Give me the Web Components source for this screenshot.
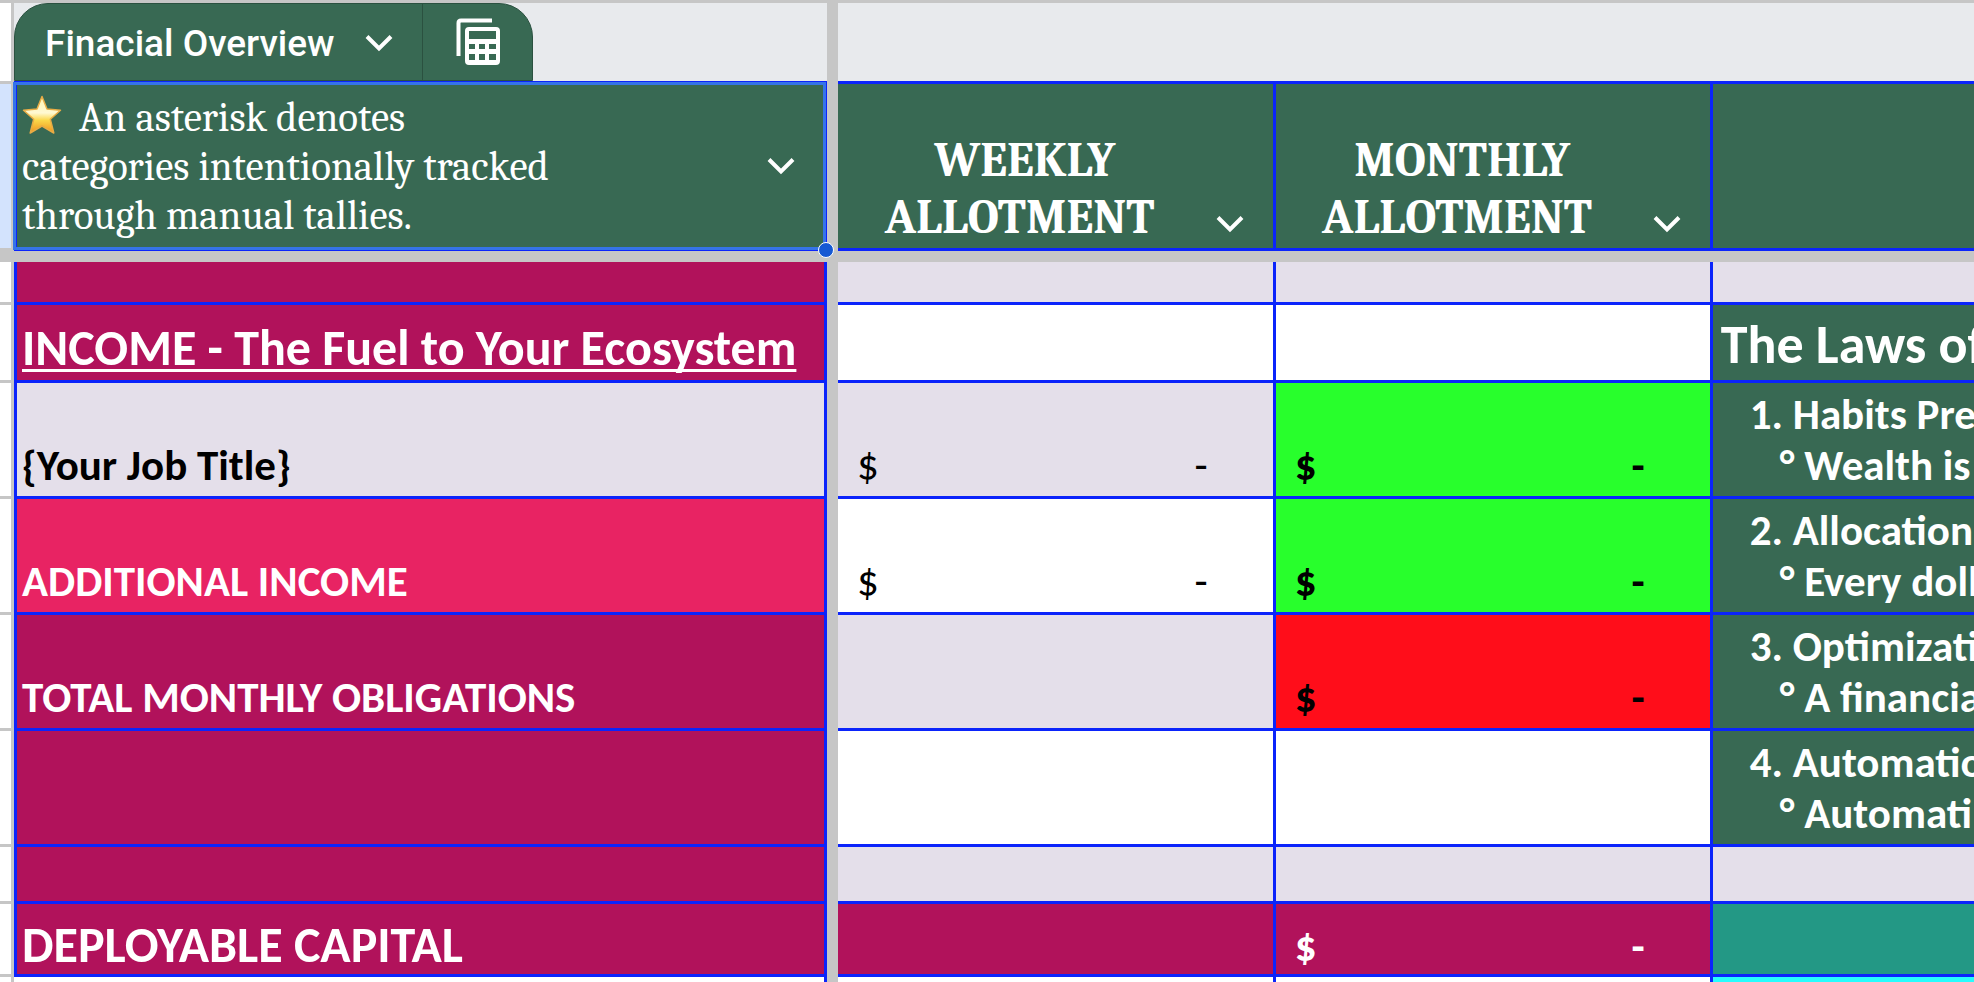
<!DOCTYPE html>
<html lang="en">
<head>
<meta charset="utf-8">
<title>Finacial Overview</title>
<style>
	body { margin: 0; background: #fff; }
</style>
</head>
<body>
<budget-sheet></budget-sheet>

<script>
const CHEVRON = `<svg width="28" height="18" viewBox="0 0 28 18" aria-hidden="true"><path d="M2 2.5 14 14.5 26 2.5" fill="none" stroke="currentColor" stroke-width="4"/></svg>`;

/* Button with a down arrow, used by the tab and the column headers */
class MenuArrow extends HTMLElement {
	connectedCallback() {
		this.attachShadow({ mode: 'open' });
		this.shadowRoot.innerHTML = `
      <style>
        :host { display: block; flex: none; }
        button {
          display: flex;
          padding: 0;
          border: 0;
          background: none;
          color: #fff;
          cursor: pointer;
        }
      </style>
      <button aria-label="${this.getAttribute('label') || 'Menu'}">${CHEVRON}</button>
    `;
	}
}

/* Table name tab that sits on top of the header row */
class TableTab extends HTMLElement {
	connectedCallback() {
		this.attachShadow({ mode: 'open' });
		this.shadowRoot.innerHTML = `
      <style>
        :host {
          display: flex;
          box-sizing: border-box;
          width: max-content;
          height: 78px;
          border: 1px solid #2b5140;
          border-radius: 34px 34px 0 0;
          background: #386953;
          color: #fff;
          font: 500 37px/1 Roboto, Inter, sans-serif;
        }
        .name {
          display: flex;
          align-items: center;
          box-sizing: border-box;
          width: 408px;
          padding: 2px 29px 0 30px;
          justify-content: space-between;
          border-right: 1px solid #2b5140;
          white-space: nowrap;
        }
        button {
          display: flex;
          align-items: center;
          justify-content: center;
          width: 109px;
          padding: 0;
          border: 0;
          background: none;
          color: inherit;
          cursor: pointer;
        }
      </style>
      <div class="name"><slot></slot><menu-arrow label="Table menu"></menu-arrow></div>
      <button aria-label="Table views">
        <svg width="44" height="48" viewBox="0 0 44 48" fill="none" stroke="currentColor" aria-hidden="true">
          <path d="M2.500 38V5q0-2.500 2.500-2.500H36" stroke-width="4"/>
          <path fill="currentColor" stroke="none" fill-rule="evenodd" d="M13 9h27a4 4 0 0 1 4 4v30a4 4 0 0 1-4 4H13a4 4 0 0 1-4-4V13a4 4 0 0 1 4-4zM13 13v8h27v-8zM13 26v5h6v-5zM23 26v5h6v-5zM33 26v5h7v-5zM13 36v6h6v-6zM23 36v6h6v-6zM33 36v6h7v-6z"/>
        </svg>
      </button>
    `;
	}
}

/* Column title with its menu arrow */
class ColumnTitle extends HTMLElement {
	connectedCallback() {
		this.attachShadow({ mode: 'open' });
		this.shadowRoot.innerHTML = `
      <style>
        :host {
          display: flex;
          align-items: flex-end;
          gap: 4px;
          padding: 0 29px 2px 0;
          color: #fff;
          font: 700 48px/57px Caladea, Cambria, "Liberation Serif", serif;
        }
        .text { flex: 1; text-align: center; }
        menu-arrow { margin-bottom: 13px; }
        :host([note]) {
          align-items: center;
          padding: 0 29px 0 5px;
          font-size: 41px;
          font-weight: 400;
          line-height: 49px;
        }
        :host([note]) .text { text-align: left; }
        :host([note]) menu-arrow { margin-bottom: 0; }
      </style>
      <div class="text"><slot></slot></div>
      <menu-arrow label="Column menu"></menu-arrow>
    `;
	}
}

class StarIcon extends HTMLElement {
	connectedCallback() {
		this.attachShadow({ mode: 'open' });
		this.shadowRoot.innerHTML = `
      <style>
        :host { display: inline-block; vertical-align: -4px; margin-right: 8px; }
        svg { display: block; }
      </style>
      <svg width="40" height="40" viewBox="0 0 40 40" role="img" aria-label="star">
        <defs><linearGradient id="g" x1="0" y1="0" x2="0" y2="1">
          <stop offset="0" stop-color="#fff3b0"/><stop offset=".45" stop-color="#fff9d2"/>
          <stop offset=".65" stop-color="#fbd84a"/><stop offset="1" stop-color="#f0921d"/>
        </linearGradient></defs>
        <path d="M20 1.500 25 14 38.500 15.200 28.300 24.200 31.800 38 20 31 8.200 38 11.700 24.200 1.500 15.200 15 14z" fill="url(#g)" stroke="#e8ac45" stroke-width="1.500" stroke-linejoin="round"/>
      </svg>
    `;
	}
}

/* Accounting format: currency sign left, amount right */
class MoneyValue extends HTMLElement {
	connectedCallback() {
		this.attachShadow({ mode: 'open' });
		this.shadowRoot.innerHTML = `
      <style>
        :host { display: flex; justify-content: space-between; padding: 0 65px 0 19px; }
      </style>
      <span>$</span><span><slot></slot></span>
    `;
	}
}

class BudgetSheet extends HTMLElement {
	connectedCallback() {
		this.attachShadow({ mode: 'open' });
		this.shadowRoot.innerHTML = `
      <style>
        :host {
          display: block;
          height: 100vh;
          overflow: hidden;
          --line: #0b24fb;
          --bar: #c6c6c6;
          --green: #386953;
          --berry: #b1125b;
          --mist: #e4dfea;
          font: 700 43px/51px Carlito, Calibri, Lato, sans-serif;
          color: #000;
        }
        table {
          width: 100%;
          table-layout: fixed;
          border-collapse: separate;
          border-spacing: 0;
          border-top: 3px solid var(--bar);
        }
        .c-num { width: 14px; }
        .c-name { width: 41.18%; }
        .c-bar { width: 11px; }
        .c-week { width: 22.18%; }
        .c-month { width: 22.14%; }

        th, td {
          box-sizing: border-box;
          padding: 0 0 5px;
          border: 0 solid var(--line);
          border-width: 0 3px 3px 0;
          text-align: left;
          vertical-align: bottom;
          font-weight: 700;
          white-space: nowrap;
          overflow: hidden;
        }
        .num { border-color: var(--bar); background: #fff; padding: 0; }
        .bar { border: 0; background: var(--bar); padding: 0; }
        .name { border-left-width: 3px; padding-left: 5px; color: #fff; }
        tr > :last-child { border-right: 0; }

        .band td { height: 81px; padding: 0; border-right: 0; background: #e8eaed; }
        .band .num { border-right: 3px solid var(--bar); background: #fff; }
        .band .bar, .freeze td { background: var(--bar); }
        .head > * { height: 167px; padding: 0; background: var(--green); white-space: normal; }
        .head .num { background: #d3e3fd; }
        .head .bar { background: var(--bar); }
        .head .name { position: relative; overflow: visible; vertical-align: middle; }
        .freeze td { height: 11px; border: 0; padding: 0; }

        .thin > * { height: 43px; }
        .title > * { height: 78px; padding-bottom: 7px; }
        .tall > * { height: 116px; }
        .gap > * { height: 57px; }
        .total > * { height: 73px; padding-bottom: 4px; }
        .total .sum { padding-bottom: 2px; }
        .last > * { height: 40px; border-bottom: 0; }
        .last .name { border-left: 0; }

        .berry { background: var(--berry); color: #fff; }
        .pink { background: #e82363; }
        .mist { background: var(--mist); }
        .lime { background: #28ff2c; }
        .red { background: #ff0d1a; }
        .teal { background: #239885; }
        .cyan { background: #27fcfd; }
        .dark { color: #000; }
        .plain { font-weight: 400; }
        .big { font-size: 50px; }
        .law { background: var(--green); color: #fff; padding-left: 37px; }
        .law p { margin: 0; }
        .law p + p { padding-left: 30px; }
        .heading { font-size: 54px; padding: 0 0 9px 8px; }
        u { text-decoration-thickness: 3px; text-underline-offset: 4px; text-decoration-skip-ink: none; }

        /* Selected cell outline and its fill handle */
        .selection {
          position: absolute;
          inset: -2px -2px -2px -4px;
          border: 3px solid #3574e8;
          pointer-events: none;
          z-index: 1;
        }
        .selection::after {
          content: '';
          position: absolute;
          right: -11px;
          bottom: -11px;
          width: 14px;
          height: 14px;
          border: 1px solid #fff;
          border-radius: 50%;
          background: #1659d3;
        }
      </style>

      <table>
        <colgroup>
          <col class="c-num"><col class="c-name"><col class="c-bar"><col class="c-week"><col class="c-month"><col>
        </colgroup>
        <thead>
          <tr class="band">
            <td class="num"></td>
            <td><table-tab>Finacial Overview</table-tab></td>
            <td class="bar"></td><td></td><td></td><td></td>
          </tr>
          <tr class="head">
            <td class="num"></td>
            <th class="name" scope="col">
              <column-title note><star-icon></star-icon> An asterisk denotes<br>categories intentionally tracked<br>through manual tallies.</column-title>
              <div class="selection"></div>
            </th>
            <td class="bar"></td>
            <th scope="col"><column-title>WEEKLY<br>ALLOTMENT&nbsp;</column-title></th>
            <th scope="col"><column-title>MONTHLY<br>ALLOTMENT&nbsp;</column-title></th>
            <th scope="col"></th>
          </tr>
          <tr class="freeze"><td colspan="6"></td></tr>
        </thead>
        <tbody>
          <tr class="thin">
            <td class="num"></td><td class="name berry"></td><td class="bar"></td>
            <td class="mist"></td><td class="mist"></td><td class="mist"></td>
          </tr>
          <tr class="title">
            <td class="num"></td>
            <th class="name berry big" scope="row"><u>INCOME - The Fuel to Your Ecosystem</u></th>
            <td class="bar"></td><td></td><td></td>
            <td class="law heading">The Laws of</td>
          </tr>
          <tr class="tall">
            <td class="num"></td>
            <th class="name mist dark" scope="row">{Your Job Title}</th>
            <td class="bar"></td>
            <td class="mist plain"><money-value>-</money-value></td>
            <td class="lime"><money-value>-</money-value></td>
            <td class="law"><p>1. Habits Pre</p><p>° Wealth is</p></td>
          </tr>
          <tr class="tall">
            <td class="num"></td>
            <th class="name pink" scope="row">ADDITIONAL INCOME</th>
            <td class="bar"></td>
            <td class="plain"><money-value>-</money-value></td>
            <td class="lime"><money-value>-</money-value></td>
            <td class="law"><p>2. Allocation</p><p>° Every doll</p></td>
          </tr>
          <tr class="tall">
            <td class="num"></td>
            <th class="name berry" scope="row">TOTAL MONTHLY OBLIGATIONS</th>
            <td class="bar"></td>
            <td class="mist"></td>
            <td class="red"><money-value>-</money-value></td>
            <td class="law"><p>3. Optimizati</p><p>° A financia</p></td>
          </tr>
          <tr class="tall">
            <td class="num"></td><td class="name berry"></td><td class="bar"></td>
            <td></td><td></td>
            <td class="law"><p>4. Automatio</p><p>° Automati</p></td>
          </tr>
          <tr class="gap">
            <td class="num"></td><td class="name berry"></td><td class="bar"></td>
            <td class="mist"></td><td class="mist"></td><td class="mist"></td>
          </tr>
          <tr class="total">
            <td class="num"></td>
            <th class="name berry big" scope="row">DEPLOYABLE CAPITAL</th>
            <td class="bar"></td>
            <td class="berry"></td>
            <td class="berry sum"><money-value>-</money-value></td>
            <td class="teal"></td>
          </tr>
          <tr class="last">
            <td class="num"></td><td class="name"></td><td class="bar"></td>
            <td></td><td></td><td class="cyan"></td>
          </tr>
        </tbody>
      </table>
    `;
	}
}

customElements.define('menu-arrow', MenuArrow);
customElements.define('table-tab', TableTab);
customElements.define('column-title', ColumnTitle);
customElements.define('star-icon', StarIcon);
customElements.define('money-value', MoneyValue);
customElements.define('budget-sheet', BudgetSheet);
</script>
</body>
</html>
